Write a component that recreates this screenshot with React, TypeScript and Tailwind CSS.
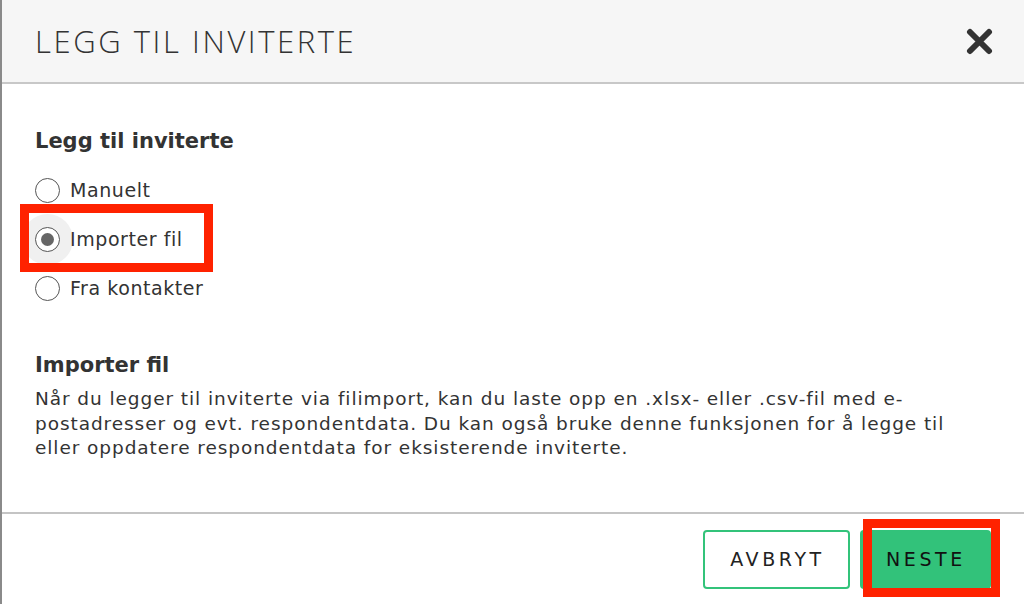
export default function App() {
  const options = ["Manuelt", "Importer fil", "Fra kontakter"];
  const selected = "Importer fil";

  return (
    <div
      className="relative w-[1024px] h-[604px] overflow-hidden bg-white border-l-2 border-[#8a8a8a] text-[#333]"
      style={{ fontFamily: '"DejaVu Sans", "Open Sans", sans-serif' }}
    >
      {/* header */}
      <div className="h-[84px] bg-[#f6f6f6] border-b-2 border-[#c8c8c8] flex items-center justify-between pl-[33px] pr-[31px]">
        <h1 className="font-['Open_Sans',sans-serif] text-[31px] font-light tracking-[0.083em] text-[#333] leading-none pt-[1px]">
          LEGG TIL INVITERTE
        </h1>
        <button className="w-[27px] h-[27px] flex items-center justify-center">
          <svg width="27" height="27" viewBox="0 0 27 27">
            <path d="M4 4 L23 23 M23 4 L4 23" stroke="#333" strokeWidth="6" strokeLinecap="round" />
          </svg>
        </button>
      </div>

      {/* body */}
      <div className="h-[430px] border-b-2 border-[#c4c4c4] pl-[33px] pr-[30px] pt-[43px]">
        <h2 className="text-[21px] font-bold leading-[28px] text-[#333]">Legg til inviterte</h2>

        <div className="mt-[23px] flex flex-col gap-[24px]">
          {options.map((o) => (
            <label key={o} className="relative flex items-center gap-[10px] h-[25px]">
              {o === selected && (
                <span className="absolute left-[-13px] top-[-13px] w-[51px] h-[51px] rounded-full bg-[#f0f0f0]" />
              )}
              <span className="relative w-[25px] h-[25px] rounded-full border-[1.5px] border-[#555] bg-white flex items-center justify-center">
                {o === selected && <span className="w-[13px] h-[13px] rounded-full bg-[#666]" />}
              </span>
              <span className="relative text-[19px] tracking-[0.03em] leading-none text-[#333]">{o}</span>
            </label>
          ))}
        </div>

        <h2 className="mt-[50px] text-[21px] font-bold leading-[28px] text-[#333]">Importer fil</h2>
        <p className="mt-[8px] max-w-[935px] text-[18.5px] tracking-[0.05em] leading-[24.5px] text-[#333]">
          Når du legger til inviterte via filimport, kan du laste opp en .xlsx- eller .csv-fil med e-postadresser og
          evt. respondentdata. Du kan også bruke denne funksjonen for å legge til eller oppdatere respondentdata for
          eksisterende inviterte.
        </p>
      </div>

      {/* footer */}
      <div className="flex justify-end gap-[10px] pr-[33px] pt-[16px]">
        <button className="w-[147px] h-[59px] rounded-[4px] border-2 border-[#33c37a] bg-white text-[19px] tracking-[0.19em] pl-[2px] text-[#222]">
          AVBRYT
        </button>
        <button className="w-[131px] h-[59px] rounded-[4px] bg-[#32c27a] text-[19px] tracking-[0.19em] pl-[1px] text-[#111]">
          NESTE
        </button>
      </div>

      {/* annotation boxes */}
      <div className="absolute left-[18px] top-[204px] w-[193px] h-[68px] border-[9px] border-[#ff2200]" />
      <div className="absolute left-[861px] top-[519px] w-[137px] h-[78px] border-[9px] border-[#ff2200]" />
    </div>
  );
}
